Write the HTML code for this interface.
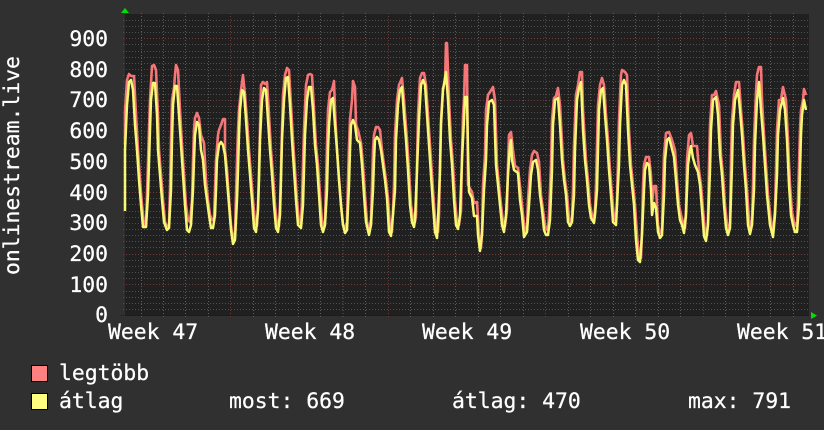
<!DOCTYPE html>
<html><head><meta charset="utf-8"><title>onlinestream.live</title>
<style>
html,body{margin:0;padding:0;background:#303030;width:824px;height:430px;overflow:hidden}
svg{display:block}
text{font-family:"DejaVu Sans Mono","Liberation Mono",monospace;font-size:21.4px;fill:#fff;stroke:#fff;stroke-width:.25px}
</style></head><body>
<svg width="824" height="430" viewBox="0 0 824 430" xmlns="http://www.w3.org/2000/svg">
<rect width="824" height="430" fill="#303030"/>
<rect x="125" y="14" width="684" height="302" fill="#202020"/>
<g shape-rendering="crispEdges" fill="none" stroke-width="1">
<path stroke="#505050" stroke-dasharray="1 2" d="M123 309.5H809M123 303.5H809M123 297.5H809M123 291.5H809M123 278.5H809M123 272.5H809M123 266.5H809M123 260.5H809M123 247.5H809M123 241.5H809M123 235.5H809M123 229.5H809M123 217.5H809M123 211.5H809M123 204.5H809M123 198.5H809M123 186.5H809M123 180.5H809M123 174.5H809M123 167.5H809M123 155.5H809M123 149.5H809M123 143.5H809M123 137.5H809M123 124.5H809M123 118.5H809M123 112.5H809M123 106.5H809M123 94.5H809M123 88.5H809M123 81.5H809M123 75.5H809M123 63.5H809M123 57.5H809M123 51.5H809M123 44.5H809M123 32.5H809M123 26.5H809M123 20.5H809"/>
<path stroke="#5e5e5e" stroke-dasharray="1 2" d="M141.500 13V318M163.500 13V318M185.500 13V318M208.500 13V318M253.500 13V318M275.500 13V318M298.500 13V318M320.500 13V318M343 13V318M365.500 13V318M410.500 13V318M433.500 13V318M455.500 13V318M478.500 13V318M500.500 13V318M523.500 13V318M568.500 13V318M590.500 13V318M613.500 13V318M635.500 13V318M658.500 13V318M680.500 13V318M725.500 13V318M748.500 13V318M770.500 13V318M793.500 13V318"/>
<path stroke="#703a3a" stroke-dasharray="1 2" d="M123 284.500H809M123 254.500H809M123 223.500H809M123 192.500H809M123 161.500H809M123 131.500H809M123 100.500H809M123 69.500H809M123 38.500H809M230.500 13V318M388.500 13V318M545.500 13V318M703.500 13V318"/>
<path stroke="#1a1a1a" stroke-dasharray="1 1" d="M121 315.500H809"/>
</g>
<polyline fill="none" stroke="#f47676" stroke-width="2.6" stroke-linejoin="round" points="125,145 125,112 127,80 129,74 131,76 134,76 136,115 138,150 140,180 142,205 144,225 146,226 147,195 149,130 150,100 152,66 154,65 156,70 158,115 159,150 161,175 163,200 165,222 167,226 169,225 170,190 171,140 172,100 174,88 175,75 176,65 178,70 180,110 182,145 184,175 186,205 188,220 190,222 192,200 193,160 194,130 195,118 197,113 199,118 201,135 204,143 206,180 208,200 210,215 212,220 214,218 215,190 216,160 218,135 219,130 221,125 223,119 225,119 225,150 227,170 229,200 231,225 233,240 235,232 236,195 237,160 238,130 239,110 241,90 243,75 245,95 247,120 249,150 251,175 253,200 255,222 257,226 258,205 259,170 260,130 261,85 263,82 265,84 267,82 269,115 271,150 273,175 275,205 277,225 279,226 280,205 281,170 282,130 283,95 285,75 287,68 289,70 291,105 293,140 295,170 297,200 299,222 301,224 302,200 303,165 304,130 306,85 308,75 310,74 312,75 314,110 316,145 318,165 320,195 322,222 324,226 325,220 326,185 327,145 328,110 330,92 332,90 334,81 335,110 337,150 339,178 341,205 343,225 345,228 347,222 348,180 349,145 350,120 352,100 353,81 355,87 356,125 358,130 361,143 363,165 365,195 367,222 369,230 371,220 372,185 373,150 374,135 376,127 378,127 380,130 382,150 384,165 386,180 388,198 390,228 392,232 393,210 394,185 395,135 397,100 399,85 402,78 404,100 407,140 409,170 411,205 413,218 415,222 416,215 417,165 418,115 420,78 422,73 424,73 426,85 428,115 430,145 432,175 434,205 436,228 438,232 439,215 440,165 441,120 443,88 445,82 446,43 447,43 449,100 451,140 453,165 455,200 457,222 459,225 461,210 462,155 463,115 464,100 465,65 467,65 468,185 472,192 474,203 477,202 479,235 481,248 482,232 483,185 485,155 486,110 488,95 490,92 493,87 495,100 497,165 499,185 501,205 503,222 505,226 507,210 508,165 509,135 511,132 513,150 515,166 518,168 521,195 523,215 525,232 527,228 528,200 530,170 532,155 534,151 537,153 539,162 541,195 543,210 545,225 547,230 548,230 549,215 551,165 552,120 554,98 556,96 558,88 560,105 563,160 565,180 567,195 569,218 571,222 572,218 573,190 574,145 576,95 578,85 580,72 582,72 583,110 586,160 588,180 590,205 592,215 594,219 595,210 596,185 597,145 598,105 600,85 602,78 604,85 606,115 608,140 610,170 612,195 614,218 616,221 617,200 618,160 619,120 621,75 622,70 625,72 627,75 629,130 631,165 633,185 635,205 637,235 639,256 641,258 642,230 643,185 644,165 646,157 649,157 651,175 652,203 654,186 656,186 658,225 660,233 662,230 663,190 664,155 666,133 669,132 672,140 675,150 677,180 679,205 681,215 683,222 685,228 686,210 687,160 689,135 691,133 693,146 695,146 697,146 699,170 701,185 703,210 705,232 707,235 708,220 709,165 710,125 712,95 714,95 716,91 719,105 721,155 723,175 725,205 727,224 729,230 730,222 731,160 732,120 734,95 736,82 739,82 741,110 743,135 745,165 747,190 749,220 751,228 752,220 753,185 754,140 756,92 757,75 759,67 761,67 762,100 764,135 766,165 768,195 771,222 773,232 775,210 776,170 777,130 779,100 781,100 783,87 786,100 788,140 790,185 792,212 794,222 796,226 797,226 798,200 800,130 801,110 803,100 804,89 806,95"/>
<polyline fill="none" stroke="#f8f873" stroke-width="2.5" stroke-linejoin="round" points="125,211 125,150 127,105 129,82 131,80 133,90 135,125 137,150 139,180 141,205 143,227 146,227 148,195 150,130 151,100 153,83 155,83 157,115 158,150 160,175 162,200 164,222 167,230 169,228 171,190 172,140 173,105 175,86 177,86 179,115 181,145 183,175 185,205 187,230 189,232 191,225 193,190 194,160 195,135 197,122 199,125 201,150 203,160 205,185 207,200 209,215 211,228 213,228 215,215 216,190 217,160 219,145 221,142 223,145 225,155 227,180 229,205 231,230 233,244 235,240 237,200 238,170 239,135 240,110 242,90 244,92 246,120 248,150 250,175 252,200 254,228 256,232 258,210 259,180 260,140 262,100 264,88 266,90 268,120 270,150 272,175 274,205 276,228 278,232 280,215 281,180 282,140 284,100 286,78 288,77 290,105 292,140 294,170 296,200 298,225 301,228 303,205 304,170 305,135 307,100 309,87 311,87 313,110 315,145 317,165 319,195 321,225 323,232 325,225 327,190 328,150 329,125 331,100 333,98 335,125 337,150 339,180 341,205 343,225 345,233 347,230 349,185 350,150 351,125 353,120 355,125 357,140 360,143 362,165 364,195 366,222 369,235 371,225 373,190 374,160 375,140 377,137 379,140 381,150 383,165 385,180 387,198 389,232 391,236 393,215 395,190 396,140 398,105 400,90 402,87 404,115 406,140 408,170 410,205 412,222 414,227 415,220 417,170 419,120 421,85 423,80 425,85 427,115 429,145 431,175 433,205 435,232 437,238 438,220 440,170 441,125 443,90 445,78 446,72 448,100 450,140 452,165 454,200 456,225 458,229 460,215 462,160 464,120 465,97 467,97 468,150 469,192 472,198 474,216 477,216 478,235 480,251 482,235 484,190 486,160 487,125 489,102 492,100 494,105 496,165 498,185 500,205 502,225 504,232 506,215 508,175 510,145 511,140 512,160 514,170 518,173 520,200 522,215 524,237 527,232 529,205 531,175 533,162 536,160 538,170 540,195 542,210 544,230 546,235 548,235 550,220 552,170 553,125 555,100 558,98 560,125 562,160 564,180 566,195 568,222 570,226 572,222 574,195 575,150 577,100 579,88 581,82 583,130 585,160 587,180 589,205 591,218 594,223 595,215 597,190 598,150 599,110 601,90 603,88 605,115 607,140 609,170 611,195 613,222 616,225 617,205 619,165 620,125 622,85 624,80 626,85 628,130 630,165 632,185 634,205 636,240 638,260 640,262 642,235 644,190 645,170 647,163 649,165 651,190 652,215 654,203 656,208 658,232 660,238 662,235 664,195 665,160 667,140 669,138 671,145 674,157 676,180 678,205 680,220 682,225 684,233 686,215 688,165 690,150 691,146 693,158 695,165 698,172 700,185 702,210 704,236 706,241 708,225 710,170 711,130 713,100 716,97 718,115 720,155 722,175 724,205 726,228 728,235 730,228 732,165 733,125 735,100 738,90 740,110 742,135 744,165 746,190 748,225 750,234 752,225 754,190 755,145 757,100 759,82 761,110 763,135 765,165 767,195 770,225 773,237 775,215 777,175 778,135 780,110 783,98 785,110 787,140 789,185 791,215 793,225 795,232 797,232 799,205 801,135 802,115 804,100 806,110"/>
<polygon points="125,8 129,13 121,13" fill="#00e000"/>
<polygon points="811,312 817,315.500 811,319" fill="#00e000"/>
<g text-anchor="end">
<text x="108" y="46">900</text>
<text x="108" y="77">800</text>
<text x="108" y="107">700</text>
<text x="108" y="138">600</text>
<text x="108" y="169">500</text>
<text x="108" y="200">400</text>
<text x="108" y="230">300</text>
<text x="108" y="261">200</text>
<text x="108" y="292">100</text>
<text x="108" y="322">0</text>
</g>
<text transform="translate(19,275) rotate(-90)">onlinestream.live</text>
<text x="108" y="339">Week 47</text>
<text x="265" y="339">Week 48</text>
<text x="422" y="339">Week 49</text>
<text x="580" y="339">Week 50</text>
<text x="737" y="339">Week 51</text>
<rect x="31.500" y="365.500" width="16" height="16" fill="#ff8080" stroke="#000" stroke-width="1"/>
<rect x="31.500" y="393.500" width="16" height="16" fill="#ffff80" stroke="#000" stroke-width="1"/>
<text x="59" y="380">legtöbb</text>
<text x="59" y="408">átlag</text>
<text x="229" y="408">most: 669</text>
<text x="452" y="408">átlag: 470</text>
<text x="688" y="408">max: 791</text>
</svg>
</body></html>
